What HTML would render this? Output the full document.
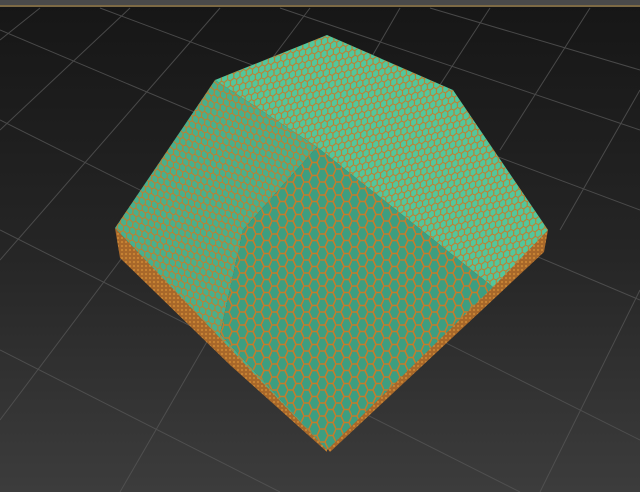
<!DOCTYPE html>
<html><head><style>
html,body{margin:0;padding:0;background:#1c1c1c;width:640px;height:492px;overflow:hidden}
svg{display:block}
</style></head><body>
<svg width="640" height="492" viewBox="0 0 640 492" xmlns="http://www.w3.org/2000/svg">
<defs>
<linearGradient id="bg" x1="0" y1="0" x2="0" y2="1">
<stop offset="0" stop-color="#161616"/><stop offset="0.5" stop-color="#252525"/><stop offset="1" stop-color="#3c3c3c"/>
</linearGradient>
<pattern id="hexs" width="10" height="8" patternUnits="userSpaceOnUse" patternTransform="rotate(-22)">
<path d="M0 0 L3 0 L5 4 L3 8 L0 8 M5 4 L8 4 L10 0 M8 4 L10 8" fill="none" stroke="#c47c2c" stroke-width="1.1"/>
</pattern>
<pattern id="hexr" width="10" height="8" patternUnits="userSpaceOnUse" patternTransform="rotate(25)">
<path d="M0 0 L3 0 L5 4 L3 8 L0 8 M5 4 L8 4 L10 0 M8 4 L10 8" fill="none" stroke="#c47c2c" stroke-width="1.1"/>
</pattern>
<pattern id="hexb" width="16" height="13" patternUnits="userSpaceOnUse">
<path d="M0 0 L5 0 L8 6.5 L5 13 L0 13 M8 6.5 L13 6.5 L16 0 M13 6.5 L16 13" fill="none" stroke="#c47c2c" stroke-width="1.5"/>
</pattern>
<pattern id="strip" width="4" height="4" patternUnits="userSpaceOnUse">
<rect width="4" height="4" fill="#a8682a"/><circle cx="2" cy="2" r="1" fill="#d08a35"/>
</pattern>
</defs>
<rect width="640" height="492" fill="url(#bg)"/>
<rect width="640" height="6" fill="#4a4a4a"/>
<rect y="5" width="640" height="2" fill="#7d6a45"/>
<g stroke="#555" stroke-width="1" opacity="0.8">
<line x1="0" y1="30" x2="640" y2="300"/><line x1="100" y1="8" x2="640" y2="210"/>
<line x1="280" y1="8" x2="640" y2="130"/><line x1="430" y1="8" x2="640" y2="70"/>
<line x1="0" y1="120" x2="640" y2="440"/><line x1="0" y1="230" x2="520" y2="492"/>
<line x1="0" y1="350" x2="280" y2="492"/>
<line x1="40" y1="8" x2="0" y2="40"/><line x1="130" y1="8" x2="0" y2="130"/>
<line x1="220" y1="8" x2="0" y2="260"/><line x1="310" y1="8" x2="0" y2="420"/>
<line x1="400" y1="8" x2="120" y2="492"/><line x1="490" y1="8" x2="300" y2="300"/>
<line x1="590" y1="8" x2="500" y2="150"/><line x1="640" y1="90" x2="560" y2="230"/>
<line x1="640" y1="290" x2="540" y2="492"/>
</g>
<polygon points="115,228 120,258 230,365 327,452 327,448" fill="url(#strip)"/>
<polygon points="548,230 544,252 330,452 327,448" fill="url(#strip)"/>
<polygon points="215,80 327,35 453,90 548,230 493,287 317,147" fill="#52c79c"/>
<polygon points="115,228 215,80 317,147 243,230 220,334 327,450" fill="#48b08d"/>
<polygon points="317,147 493,287 327,450 220,334 243,230" fill="#3d9e80"/>
<polygon points="215,80 327,35 453,90 548,230 493,287 317,147" fill="url(#hexr)"/>
<polygon points="115,228 215,80 317,147 243,230 220,334 327,450" fill="url(#hexs)"/>
<polygon points="317,147 493,287 327,450 220,334 243,230" fill="url(#hexb)"/>
</svg>
</body></html>
